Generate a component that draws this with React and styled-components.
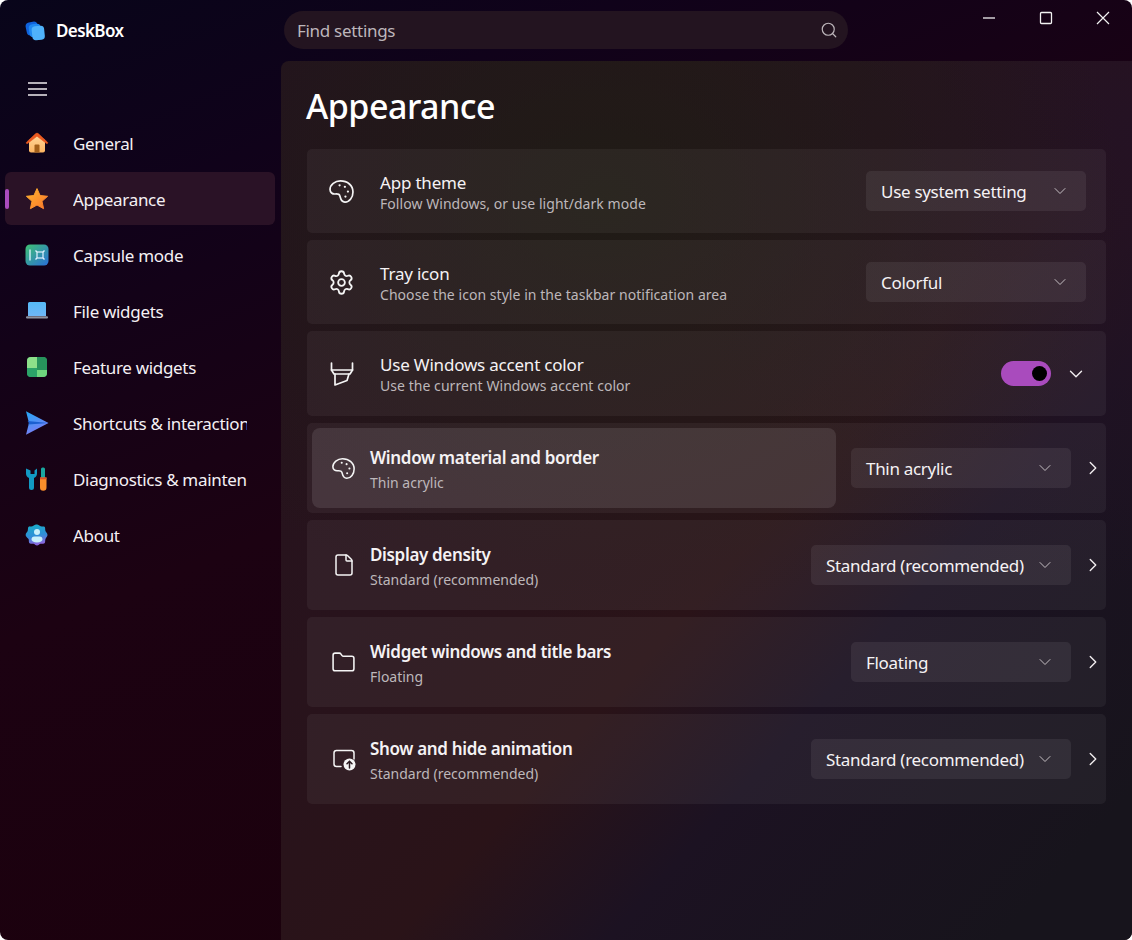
import React from "react";
import styled, { createGlobalStyle } from "styled-components";
import { Settings, File, Folder, Search, ChevronDown, ChevronRight } from "lucide-react";

const Global = createGlobalStyle`
  html, body { margin: 0; padding: 0; background: #fff; }
  * { box-sizing: border-box; }
  #root { width: 1132px; height: 940px; }
`;

const Window = styled.div`
  width: 1132px;
  height: 940px;
  display: flex;
  overflow: hidden;
  border-radius: 8px;
  color: #fff;
  font-family: "Noto Sans", "Open Sans", sans-serif;
  background:
    linear-gradient(158deg, #08051a 0%, #10021a 18%, #1c0212 46%, #1b0009 100%);
`;

const Sidebar = styled.aside`
  width: 281px;
  flex: none;
  display: flex;
  flex-direction: column;
  padding: 0 6px 0 5px;
`;

const Brand = styled.div`
  height: 61px;
  display: flex;
  align-items: center;
  gap: 9px;
  padding-left: 20px;
  font-size: 17px;
  font-weight: 600;
  letter-spacing: -0.6px;
`;

const MenuButton = styled.div`
  height: 55px;
  display: flex;
  align-items: center;
  padding: 1px 0 0 23px;
`;

const NavList = styled.nav`
  display: flex;
  flex-direction: column;
  gap: 3px;
`;

const NavItem = styled.div`
  position: relative;
  height: 53px;
  display: flex;
  align-items: center;
  gap: 24px;
  padding-left: 20px;
  border-radius: 6px;
  background: ${(p) => (p.$active ? "#2a1226" : "transparent")};
`;

const ActiveMark = styled.span`
  position: absolute;
  left: 0;
  top: 17px;
  width: 4px;
  height: 20px;
  border-radius: 2px;
  background: #a94bbd;
`;

const NavIcon = styled.svg`
  width: 24px;
  height: 24px;
  flex: none;
`;

const NavLabel = styled.span`
  width: 174px;
  overflow: hidden;
  white-space: nowrap;
  padding-top: 1px;
  font-size: 17px;
  letter-spacing: -0.32px;
  color: #f4f0f4;
`;

const Main = styled.main`
  flex: 1;
  min-width: 0;
  display: flex;
  flex-direction: column;
`;

const TitleBar = styled.header`
  height: 61px;
  flex: none;
  position: relative;
  padding: 11px 0 0 3px;
`;

const SearchBox = styled.div`
  width: 564px;
  height: 38px;
  border-radius: 19px;
  display: flex;
  align-items: center;
  justify-content: space-between;
  padding: 0 10px 0 13px;
  background: #231420;
  color: #bdb6bb;
  font-size: 17px;
  letter-spacing: -0.3px;
`;

const WindowControls = styled.div`
  position: absolute;
  top: 0;
  right: 1px;
  display: flex;
`;

const ControlButton = styled.div`
  width: 57px;
  height: 36px;
  display: flex;
  align-items: center;
  justify-content: center;
  color: #f2f2f2;
`;

const Panel = styled.section`
  flex: 1;
  border-radius: 8px 0 0 0;
  padding: 20px 26px 0 26px;
  background:
    radial-gradient(520px 420px at 38% 16%, rgba(30,30,20,.8) 0%, rgba(30,30,20,0) 100%),
    radial-gradient(480px 460px at 100% 8%, rgba(36,18,36,.95) 0%, rgba(36,18,36,0) 100%),
    linear-gradient(132deg, #24121f 0%, #28131c 35%, #2a1318 55%, #1c1222 68%, #17141c 92%);
`;

const PageTitle = styled.h1`
  margin: 0 0 17px -1px;
  height: 51px;
  line-height: 51px;
  font-size: 34px;
  font-weight: 500;
  letter-spacing: -0.5px;
`;

const Cards = styled.div`
  display: flex;
  flex-direction: column;
  gap: 7px;
`;

const Card = styled.div`
  height: ${(p) => p.$h}px;
  display: flex;
  align-items: center;
  border-radius: 5px;
  padding: 0 20px;
  background: rgba(255,255,255,.05);
`;

const ExpandCard = styled(Card)`
  padding: 0 2px 0 5px;
`;

const RowHover = styled.div`
  flex: 1;
  min-width: 0;
  height: 80px;
  display: flex;
  align-items: center;
  border-radius: 8px;
  padding-left: 17px;
  margin-right: 15px;
  background: ${(p) => (p.$hover ? "rgba(255,255,255,.1)" : "transparent")};
`;

const IconSlot = styled.div`
  width: 29px;
  flex: none;
  display: flex;
  justify-content: center;
  color: #f5f5f5;
  margin-right: 24px;
`;

const SmallIconSlot = styled(IconSlot)`
  margin-right: 12px;
`;

const TextBlock = styled.div`
  flex: 1;
  min-width: 0;
  display: flex;
  flex-direction: column;
  padding-top: ${(p) => (p.$tight ? 1 : 3)}px;
`;

const RowTitle = styled.div`
  font-size: 17px;
  line-height: 22px;
  letter-spacing: -0.2px;
  color: #f5f2f4;
`;

const RowHint = styled.div`
  font-size: 14px;
  line-height: 18px;
  margin-top: 1px;
  letter-spacing: 0.05px;
  color: #bdb7ba;
`;

const StrongTitle = styled.div`
  font-size: 17px;
  line-height: 24px;
  font-weight: 600;
  letter-spacing: -0.34px;
  color: #f5f2f4;
`;

const StrongHint = styled(RowHint)`
  margin-top: 2px;
  line-height: 22px;
  letter-spacing: 0;
`;

const Select = styled.div`
  width: ${(p) => p.$w}px;
  height: 40px;
  flex: none;
  display: flex;
  align-items: center;
  justify-content: space-between;
  padding: 0 16px 0 15px;
  border-radius: 5px;
  background: rgba(255,255,255,.07);
  font-size: 17px;
  letter-spacing: -0.3px;
  color: #f5f2f4;
`;

const SelectChevron = styled(ChevronDown)`
  color: #c4bec2;
`;

const Toggle = styled.div`
  width: 50px;
  height: 25px;
  border-radius: 13px;
  background: #a94bbd;
  display: flex;
  align-items: center;
  justify-content: flex-end;
  padding-right: 4px;
  margin-right: 14px;
`;

const Knob = styled.span`
  width: 15px;
  height: 15px;
  border-radius: 50%;
  background: #000;
`;

const CaretButton = styled.div`
  width: 22px;
  flex: none;
  display: flex;
  justify-content: center;
  color: #f2eef0;
  margin-right: -1px;
`;

const RightCaret = styled(CaretButton)`
  margin: 0 0 0 11px;
`;

const HomeIcon = () => (
  <NavIcon viewBox="0 0 24 24">
    <defs><linearGradient id="hm" x1="0" y1="0" x2="0" y2="1"><stop offset="0" stopColor="#ffd9a0" /><stop offset="1" stopColor="#fdb561" /></linearGradient></defs>
    <path d="M4 9 12 3l8 6v10.500a2 2 0 0 1-2 2H6a2 2 0 0 1-2-2z" fill="url(#hm)" />
    <path d="M1.500 11.200 10.500 2.800a2.200 2.200 0 0 1 3 0l9 8.400c.6.600-.2 1.900-1 1.300L12 5.200 2.500 12.500c-.8.600-1.600-.7-1-1.300z" fill="#ea5a20" stroke="#ea5a20" strokeWidth=".6" />
    <path d="M9.500 14.500a1 1 0 0 1 1-1h3a1 1 0 0 1 1 1v7h-5z" fill="#a4601a" />
  </NavIcon>
);
const StarIcon = () => (
  <NavIcon viewBox="0 0 24 24">
    <defs><linearGradient id="st" x1="0" y1="0" x2="1" y2="1"><stop offset="0" stopColor="#ffb52e" /><stop offset="1" stopColor="#f9762c" /></linearGradient></defs>
    <path d="M12 1.600l3.100 6.900 7.500.8-5.600 5 1.600 7.400L12 18l-6.600 3.700L7 14.300l-5.600-5 7.500-.8z" fill="url(#st)" stroke="url(#st)" strokeWidth="1" strokeLinejoin="round" />
  </NavIcon>
);
const CapsuleIcon = () => (
  <NavIcon viewBox="0 0 24 24">
    <defs><linearGradient id="ca" x1="0" y1="0" x2="1" y2="1"><stop offset="0" stopColor="#3fc273" /><stop offset="1" stopColor="#2a6fd8" /></linearGradient></defs>
    <rect x=".5" y="1.500" width="23" height="21" rx="4.500" fill="url(#ca)" />
    <path d="M5 6.500v11" stroke="#dff1ff" strokeWidth="1.300" />
    <rect x="12" y="9" width="6" height="6" fill="none" stroke="#dff1ff" strokeWidth="1.200" />
    <path d="M10.500 7.500 12 9M19.500 7.500 18 9M10.500 16.500 12 15M19.500 16.500 18 15" stroke="#dff1ff" strokeWidth="1.400" />
  </NavIcon>
);
const LaptopIcon = () => (
  <NavIcon viewBox="0 0 24 24">
    <defs><linearGradient id="la" x1="0" y1="0" x2="0" y2="1"><stop offset="0" stopColor="#55b9f6" /><stop offset="1" stopColor="#6fb6f7" /></linearGradient></defs>
    <path d="M4.500 3h15A1.500 1.500 0 0 1 21 4.500V17H3V4.500A1.500 1.500 0 0 1 4.500 3z" fill="url(#la)" />
    <rect x="1" y="17.300" width="22" height="2.200" rx="1" fill="#8f93a0" />
  </NavIcon>
);
const WidgetIcon = () => (
  <NavIcon viewBox="0 0 24 24">
    <rect x="2" y="2" width="20" height="20" rx="4" fill="#2f9f62" />
    <path d="M12 2h6a4 4 0 0 1 4 4v9H12z" fill="#27935c" />
    <path d="M2 13V6a4 4 0 0 1 4-4h6v11z" fill="#8de08a" />
    <path d="M12 15h10v3a4 4 0 0 1-4 4h-6z" fill="#6ed67e" />
    <path d="M2 13h10v9H6a4 4 0 0 1-4-4z" fill="#2ba368" />
  </NavIcon>
);
const SendIcon = () => (
  <NavIcon viewBox="0 0 24 24">
    <defs><linearGradient id="se" x1="0" y1="0" x2="0.400" y2="1"><stop offset="0" stopColor="#22a8f5" /><stop offset="1" stopColor="#7d7cf5" /></linearGradient></defs>
    <path d="M1 .3 23.500 12 1 23.700l3-11.700z" fill="url(#se)" />
    <path d="M2.600 10 23.500 12 3 13.600l1-1.600z" fill="#1b5fd0" />
  </NavIcon>
);
const ToolsIcon = () => (
  <NavIcon viewBox="0 0 24 24">
    <path d="M1 1.500v5a5 5 0 0 0 3 4.500v9.500a2.500 2.500 0 0 0 5 0V11a5 5 0 0 0 3-4.500v-5l-2.500 2V7h-4V3.500z" fill="#129ac4" />
    <rect x="16" y=".5" width="4" height="11" rx="1.500" fill="#19a7a0" />
    <path d="M15 10.500h6.500v10a3.200 3.200 0 0 1-6.500 0z" fill="#f98e2b" />
    <rect x="15" y="10.500" width="6.500" height="1.800" fill="#d8542a" />
  </NavIcon>
);
const AboutIcon = () => (
  <NavIcon viewBox="0 0 24 24">
    <defs><linearGradient id="ab" x1="0" y1="0" x2="0.200" y2="1"><stop offset="0" stopColor="#17b0c6" /><stop offset="0.600" stopColor="#2f8fd8" /><stop offset="1" stopColor="#8b66de" /></linearGradient></defs>
    <path d="M12 .5c1.600 0 2.600 1.500 4 1.800 1.800.4 3.700-.3 4.500 1 .8 1.300.2 3 .8 4.400.5 1.300 2.200 2.600 2.200 4.300s-1.700 3-2.200 4.300c-.6 1.400 0 3.100-.8 4.400-.8 1.300-2.700.6-4.500 1-1.400.3-2.400 1.800-4 1.800s-2.600-1.500-4-1.800c-1.800-.4-3.700.3-4.500-1-.8-1.300-.2-3-.8-4.400C1.200 15 -.5 13.700-.5 12s1.700-3 2.200-4.300c.6-1.400 0-3.100.8-4.400.8-1.300 2.700-.6 4.500-1 1.400-.3 2.400-1.800 4-1.800z" fill="url(#ab)" transform="translate(1.100 1.100) scale(.91)" />
    <circle cx="12" cy="9" r="3" fill="#c9f0fb" />
    <path d="M6.500 16.500a3 3 0 0 1 3-3h5a3 3 0 0 1 3 3c0 1.500-2 3-5.500 3s-5.500-1.500-5.500-3z" fill="#c9f0fb" />
  </NavIcon>
);

const LogoIcon = () => (
  <svg width="22" height="22" viewBox="0 0 22 22">
    <rect x="1" y="2" width="12" height="13" rx="4" transform="rotate(-12 7 8)" fill="#0f62dc" />
    <rect x="4" y="4" width="12" height="13" rx="4" transform="rotate(-8 10 10)" fill="#2089f0" />
    <rect x="7" y="6" width="12.500" height="14" rx="3.500" transform="rotate(-6 13 13)" fill="#4fb2fb" />
  </svg>
);

const PaletteIcon = ({ size }) => (
  <svg width={size} height={size} viewBox="0 0 24 24" fill="none" stroke="currentColor" strokeWidth="1.500" strokeLinejoin="round">
    <path d="M11 2.600C6.300 2.600 1.800 6 1.800 10.300c0 2.700 2.200 4.100 4.500 3.900 2.200-.2 3.700 0 4.200 1.500.6 2 .8 5.600 4.500 5.700 4.200.1 7.200-4.300 7.200-9 0-5.800-4.800-9.800-11.200-9.800z" />
    <circle cx="10.300" cy="6.500" r="1" fill="currentColor" stroke="none" />
    <circle cx="15" cy="7.800" r="1" fill="currentColor" stroke="none" />
    <circle cx="17.700" cy="12" r="1" fill="currentColor" stroke="none" />
    <circle cx="15.500" cy="16.500" r="1" fill="currentColor" stroke="none" />
  </svg>
);

const HighlighterIcon = () => (
  <svg width="26" height="28" viewBox="0 0 26 28" fill="none" stroke="currentColor" strokeWidth="1.700" strokeLinejoin="round" strokeLinecap="round">
    <path d="M2.500 3v7h21V3" />
    <path d="M2.500 10l2.500 4h16l2.500-4" />
    <path d="M6 14v11l12-4.500 2-6.500" />
  </svg>
);

const AnimationIcon = () => (
  <svg width="24" height="24" viewBox="0 0 24 24" fill="none" stroke="currentColor" strokeWidth="1.500" strokeLinecap="round">
    <path d="M9 19.500H4.500a2.500 2.500 0 0 1-2.500-2.500V6a2.500 2.500 0 0 1 2.500-2.500h15A2.500 2.500 0 0 1 22 6v6" />
    <circle cx="17.500" cy="17.500" r="6" fill="#f5f5f5" stroke="none" />
    <path d="M17.500 21v-6.500M15 16.800l2.500-2.500 2.500 2.500" stroke="#2a1a20" strokeWidth="1.500" />
  </svg>
);

const navItems = [
  ["General", HomeIcon],
  ["Appearance", StarIcon, true],
  ["Capsule mode", CapsuleIcon],
  ["File widgets", LaptopIcon],
  ["Feature widgets", WidgetIcon],
  ["Shortcuts & interactions", SendIcon],
  ["Diagnostics & maintenance", ToolsIcon],
  ["About", AboutIcon],
];

const expandRows = [
  { title: "Window material and border", hint: "Thin acrylic", value: "Thin acrylic", w: 220, icon: <PaletteIcon size={25} />, hover: true },
  { title: "Display density", hint: "Standard (recommended)", value: "Standard (recommended)", w: 260, icon: <File size={24} strokeWidth={1.5} /> },
  { title: "Widget windows and title bars", hint: "Floating", value: "Floating", w: 220, icon: <Folder size={25} strokeWidth={1.5} /> },
  { title: "Show and hide animation", hint: "Standard (recommended)", value: "Standard (recommended)", w: 260, icon: <AnimationIcon /> },
];

export default function App() {
  return (
    <>
      <Global />
      <Window>
        <Sidebar>
          <Brand><LogoIcon />DeskBox</Brand>
          <MenuButton>
            <svg width="19" height="14" viewBox="0 0 19 14" stroke="#f0ecf0" strokeWidth="1.300"><path d="M0 1h19M0 7h19M0 13h19" /></svg>
          </MenuButton>
          <NavList>
            {navItems.map(([label, Icon, active]) => (
              <NavItem key={label} $active={active}>
                {active && <ActiveMark />}
                <Icon />
                <NavLabel>{label}</NavLabel>
              </NavItem>
            ))}
          </NavList>
        </Sidebar>
        <Main>
          <TitleBar>
            <SearchBox>
              Find settings
              <Search size={18} strokeWidth={1.6} />
            </SearchBox>
            <WindowControls>
              <ControlButton>
                <svg width="14" height="14" viewBox="0 0 14 14" stroke="currentColor" strokeWidth="1.300"><path d="M1 7h12" /></svg>
              </ControlButton>
              <ControlButton>
                <svg width="14" height="14" viewBox="0 0 14 14" fill="none" stroke="currentColor" strokeWidth="1.300"><rect x="1.500" y="1.500" width="11" height="11" rx="1" /></svg>
              </ControlButton>
              <ControlButton>
                <svg width="14" height="14" viewBox="0 0 14 14" stroke="currentColor" strokeWidth="1.200"><path d="M1 1l12 12M13 1 1 13" /></svg>
              </ControlButton>
            </WindowControls>
          </TitleBar>
          <Panel>
            <PageTitle>Appearance</PageTitle>
            <Cards>
              <Card $h={84}>
                <IconSlot><PaletteIcon size={27} /></IconSlot>
                <TextBlock><RowTitle>App theme</RowTitle><RowHint>Follow Windows, or use light/dark mode</RowHint></TextBlock>
                <Select $w={220}>Use system setting<SelectChevron size={20} strokeWidth={1.2} /></Select>
              </Card>
              <Card $h={84}>
                <IconSlot><Settings size={27} strokeWidth={1.6} /></IconSlot>
                <TextBlock><RowTitle>Tray icon</RowTitle><RowHint>Choose the icon style in the taskbar notification area</RowHint></TextBlock>
                <Select $w={220}>Colorful<SelectChevron size={20} strokeWidth={1.2} /></Select>
              </Card>
              <Card $h={85}>
                <IconSlot><HighlighterIcon /></IconSlot>
                <TextBlock $tight><RowTitle>Use Windows accent color</RowTitle><RowHint>Use the current Windows accent color</RowHint></TextBlock>
                <Toggle><Knob /></Toggle>
                <CaretButton><ChevronDown size={26} strokeWidth={1.5} /></CaretButton>
              </Card>
              {expandRows.map((r) => (
                <ExpandCard key={r.title} $h={90}>
                  <RowHover $hover={r.hover}>
                    <SmallIconSlot>{r.icon}</SmallIconSlot>
                    <TextBlock><StrongTitle>{r.title}</StrongTitle><StrongHint>{r.hint}</StrongHint></TextBlock>
                  </RowHover>
                  <Select $w={r.w}>{r.value}<SelectChevron size={20} strokeWidth={1.2} /></Select>
                  <RightCaret><ChevronRight size={24} strokeWidth={1.5} /></RightCaret>
                </ExpandCard>
              ))}
            </Cards>
          </Panel>
        </Main>
      </Window>
    </>
  );
}
